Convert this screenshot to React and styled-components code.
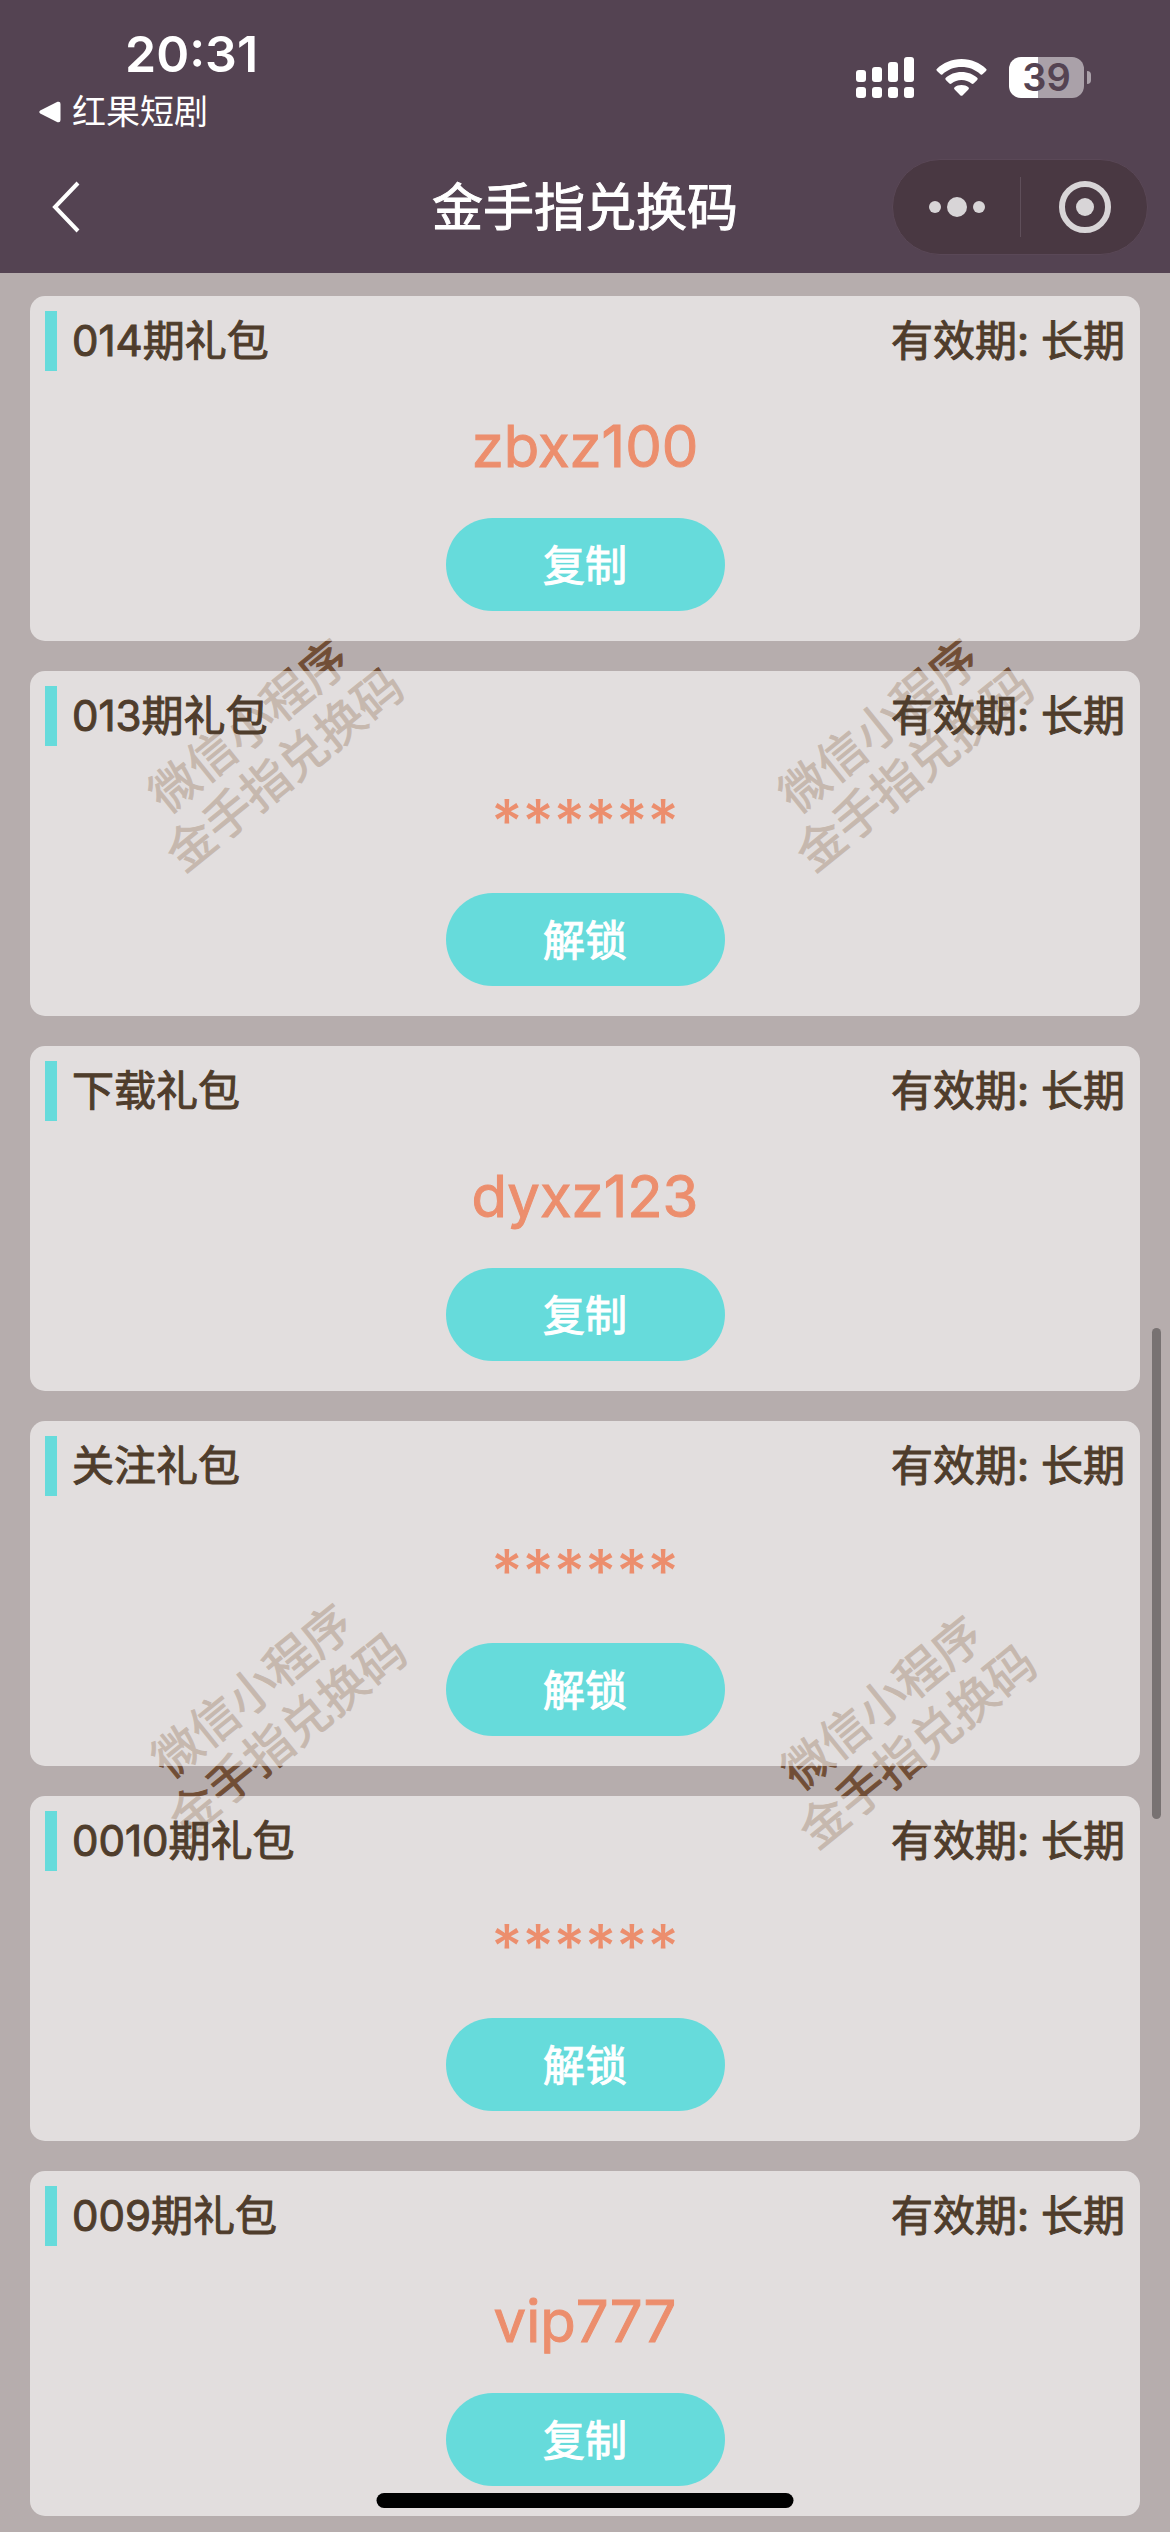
import React from 'react';
import styled, { createGlobalStyle } from 'styled-components';

const packs = [
    { id: 1, title: '014期礼包', code: 'zbxz100', unlocked: true },
    { id: 2, title: '013期礼包', code: '******', unlocked: false },
    { id: 3, title: '下载礼包', code: 'dyxz123', unlocked: true },
    { id: 4, title: '关注礼包', code: '******', unlocked: false },
    { id: 5, title: '0010期礼包', code: '******', unlocked: false },
    { id: 6, title: '009期礼包', code: 'vip777', unlocked: true },
];

const watermarks = [
    { x: 267, y: 475 },
    { x: 897, y: 475 },
    { x: 270, y: 1440 },
    { x: 900, y: 1452 },
];

const SignalIcon = () => (
    <svg width="58" height="41" viewBox="0 0 58 41" fill="#fff" aria-hidden="true">
        <rect x="0" y="13" width="10" height="12" rx="3" />
        <rect x="16" y="10" width="10" height="15" rx="3" />
        <rect x="32" y="5" width="10" height="20" rx="3" />
        <rect x="48" y="0" width="10" height="25" rx="3" />
        <rect x="0" y="30" width="10" height="11" rx="3" />
        <rect x="16" y="30" width="10" height="11" rx="3" />
        <rect x="32" y="30" width="10" height="11" rx="3" />
        <rect x="48" y="30" width="10" height="11" rx="3" />
    </svg>
);

const WifiIcon = () => (
    <svg width="51" height="41" viewBox="0 0 51 41" fill="#fff" aria-hidden="true">
        <path d="M25.500 2C35.500 2 43.600 5.800 50 11.700Q51.200 12.800 50 14L46.500 17.300Q45.500 18.200 44.400 17.200C39.300 12.600 32.900 10 25.500 10C18.100 10 11.700 12.600 6.600 17.200Q5.500 18.200 4.500 17.300L1 14Q-.2 12.800 1 11.700C7.400 5.800 15.500 2 25.500 2Z" />
        <path d="M25.500 15C31.900 15 37.300 17.300 41.200 20.800Q42.300 21.900 41.200 23L37.600 26.500Q36.600 27.400 35.500 26.500C32.700 24.300 29.400 23 25.500 23C21.600 23 18.300 24.300 15.500 26.500Q14.400 27.400 13.400 26.500L9.800 23Q8.700 21.900 9.800 20.800C13.700 17.300 19.100 15 25.500 15Z" />
        <path d="M25.500 28C28.300 28 30.600 28.800 32.400 30.200Q33.600 31.300 32.400 32.500L26.500 38.400Q25.500 39.300 24.500 38.400L18.600 32.500Q17.400 31.300 18.600 30.200C20.400 28.800 22.700 28 25.500 28Z" />
    </svg>
);

const MoreIcon = () => (
    <svg width="56" height="22" viewBox="0 0 56 22" fill="#d8d5d7" aria-hidden="true">
        <circle cx="6" cy="11" r="6" />
        <circle cx="28" cy="11" r="10" />
        <circle cx="50" cy="11" r="6" />
    </svg>
);

const TargetIcon = () => (
    <svg width="52" height="52" viewBox="0 0 52 52" aria-hidden="true">
        <circle cx="26" cy="26" r="23" fill="none" stroke="#d8d5d7" strokeWidth="6" />
        <circle cx="26" cy="26" r="9" fill="#d8d5d7" />
    </svg>
);

const Pack = ({ title, code, unlocked }) => (
    <Card>
        <CardHead>
            <CardTitle>{title}</CardTitle>
            <span>有效期: 长期</span>
        </CardHead>
        <Code $masked={!unlocked}>{code}</Code>
        <ActionButton type="button">{unlocked ? '复制' : '解锁'}</ActionButton>
    </Card>
);

const App = () => {
    return (
        <Page>
            <GlobalStyle />
            <Header>
                <StatusBar>
                    <StatusLeft>
                        <Time>20:31</Time>
                        <ReturnLink href="#">
                            <svg width="22" height="22" viewBox="0 0 22 22" fill="#fff" aria-hidden="true">
                                <path d="M1.200 9.500L18.500 .8Q21.500 0 21.500 3V19Q21.500 22 18.500 21.200L1.200 12.500Q-.6 11 1.200 9.500Z" />
                            </svg>
                            红果短剧
                        </ReturnLink>
                    </StatusLeft>
                    <StatusRight>
                        <SignalIcon />
                        <WifiIcon />
                        <Battery>
                            <BatteryBody>39</BatteryBody>
                            <BatteryTip />
                        </Battery>
                    </StatusRight>
                </StatusBar>
                <NavBar>
                    <BackButton type="button" aria-label="返回">
                        <svg width="28" height="52" viewBox="0 0 28 52" fill="none" stroke="#fff" strokeWidth="4" aria-hidden="true">
                            <path d="M26 2L3 26L26 50" />
                        </svg>
                    </BackButton>
                    <NavTitle>金手指兑换码</NavTitle>
                    <Capsule>
                        <CapsuleButton type="button" aria-label="更多">
                            <MoreIcon />
                        </CapsuleButton>
                        <CapsuleButton type="button" aria-label="关闭">
                            <TargetIcon />
                        </CapsuleButton>
                    </Capsule>
                </NavBar>
            </Header>
            <Content>
                {watermarks.map(({ x, y }) => (
                    <Watermark key={`${x}-${y}`} style={{ left: x, top: y }} aria-hidden="true">
                        微信小程序
                        <br />
                        金手指兑换码
                    </Watermark>
                ))}
                <PackList>
                    {packs.map((pack) => (
                        <Pack key={pack.id} {...pack} />
                    ))}
                </PackList>
            </Content>
            <ScrollThumb />
            <HomeIndicator />
        </Page>
    );
};

const GlobalStyle = createGlobalStyle`
    * {
        box-sizing: border-box;
        margin: 0;
        padding: 0;
    }
    body {
        background-color: #b6adad;
        font-family: Inter, "Noto Sans CJK SC", sans-serif;
    }
    button {
        border: none;
        background: none;
        font: inherit;
        cursor: pointer;
    }
    svg {
        display: block;
    }
`;

const Page = styled.div`
    position: relative;
    color: #4f3d2c;
`;

const Header = styled.header`
    background-color: #544352;
    color: #fff;
`;

const StatusBar = styled.div`
    display: flex;
    justify-content: space-between;
    padding: 24px 79px 0 39px;
    height: 141px;
`;

const StatusLeft = styled.div`
    display: flex;
    flex-direction: column;
`;

const Time = styled.time`
    padding-left: 86px;
    font-size: 50px;
    font-weight: 600;
    line-height: 60px;
`;

const ReturnLink = styled.a`
    display: flex;
    align-items: center;
    gap: 11px;
    color: #fff;
    font-size: 34px;
    line-height: 56px;
    text-decoration: none;
`;

const StatusRight = styled.div`
    display: flex;
    align-items: flex-start;
    gap: 22px;
    padding-top: 33px;
`;

const Battery = styled.div`
    display: flex;
    align-items: center;
    gap: 3px;
`;

const BatteryBody = styled.div`
    width: 75px;
    height: 41px;
    border-radius: 12px;
    background: linear-gradient(90deg, #fff 39%, #aaa1a9 39%);
    color: #544352;
    font-size: 38px;
    font-weight: 600;
    line-height: 41px;
    text-align: center;
`;

const BatteryTip = styled.div`
    width: 4px;
    height: 13px;
    border-radius: 0 4px 4px 0;
    background-color: #aaa1a9;
`;

const NavBar = styled.nav`
    display: grid;
    grid-template-columns: 1fr auto 1fr;
    align-items: center;
    height: 132px;
    padding: 0 22px;
`;

const BackButton = styled.button`
    justify-self: start;
    padding: 0 30px;
`;

const NavTitle = styled.h1`
    padding-top: 2px;
    font-size: 51px;
    font-weight: 400;
    line-height: 72px;
    -webkit-text-stroke: 1px currentColor;
`;

const Capsule = styled.div`
    display: flex;
    justify-self: end;
    width: 256px;
    height: 96px;
    border: 1px solid #5a4857;
    border-radius: 48px;
    background-color: #493842;
`;

const CapsuleButton = styled.button`
    display: flex;
    flex: 1;
    align-items: center;
    justify-content: center;
    & + &::before {
        content: '';
        width: 1px;
        height: 60px;
        margin-right: 38px;
        background-color: #5f4f5a;
    }
    & + & {
        justify-content: flex-start;
    }
`;

const Content = styled.main`
    position: relative;
    padding: 23px 30px 16px;
`;

const Watermark = styled.p`
    position: absolute;
    transform: translate(-50%, -50%) rotate(-39deg);
    color: #714e36;
    font-size: 48px;
    line-height: 56px;
    text-align: center;
    white-space: nowrap;
    -webkit-text-stroke: 1px currentColor;
`;

const PackList = styled.ul`
    position: relative;
    display: flex;
    flex-direction: column;
    gap: 30px;
    list-style: none;
`;

const Card = styled.li`
    display: flex;
    flex-direction: column;
    align-items: center;
    padding: 15px 15px 30px;
    border-radius: 15px;
    background-color: rgba(255, 255, 255, 0.6);
`;

const CardHead = styled.div`
    display: flex;
    justify-content: space-between;
    align-self: stretch;
    font-size: 42px;
    line-height: 60px;
    -webkit-text-stroke: 1px currentColor;
`;

const CardTitle = styled.h2`
    padding-left: 15px;
    border-left: 12px solid #66dbdb;
    font-size: 42px;
    font-weight: 400;
`;

const Code = styled.p`
    margin: 33px 0 30px;
    color: #ec8e6d;
    font-size: ${({ $masked }) => ($masked ? '60px' : '58px')};
    font-weight: ${({ $masked }) => ($masked ? 500 : 400)};
    line-height: 84px;
    -webkit-text-stroke: ${({ $masked }) => ($masked ? '0' : '1px currentColor')};
`;

const ActionButton = styled.button`
    width: 279px;
    height: 93px;
    padding-bottom: 4px;
    border-radius: 47px;
    background-color: #66dbdb;
    color: #fff;
    font-size: 42px;
    -webkit-text-stroke: 1px currentColor;
`;

const ScrollThumb = styled.div`
    position: absolute;
    top: 1328px;
    right: 9px;
    width: 9px;
    height: 491px;
    border-radius: 5px;
    background-color: #787272;
`;

const HomeIndicator = styled.div`
    position: absolute;
    bottom: 24px;
    left: 50%;
    width: 417px;
    height: 15px;
    border-radius: 8px;
    background-color: #000;
    transform: translateX(-50%);
`;

export default App;
